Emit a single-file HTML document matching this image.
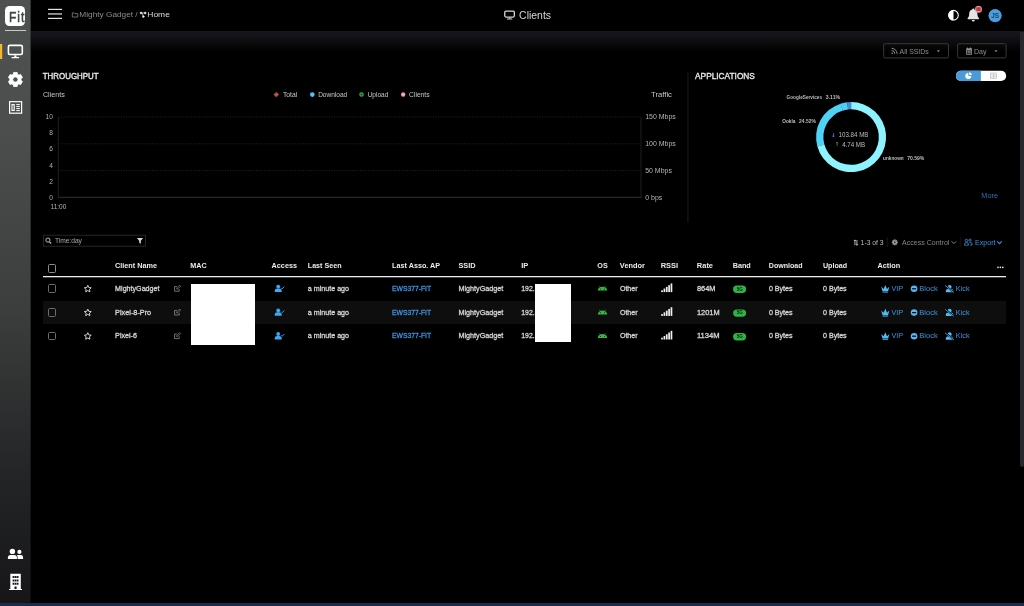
<!DOCTYPE html>
<html lang="en">
<head>
<meta charset="utf-8">
<title>Clients</title>
<style>
*{box-sizing:border-box;margin:0;padding:0}
html,body{width:1024px;height:606px;overflow:hidden;background:#000}
body{position:relative;font-family:"Liberation Sans",sans-serif;color:#ccc}
.abs,.t,svg.i{position:absolute}
.t{white-space:nowrap;line-height:1;display:block}
#side{left:0;top:0;width:31px;height:606px;background:linear-gradient(180deg,#4d5150 0px,#4b4e4d 130px,#3d3f3f 300px,#232425 480px,#161618 606px);border-right:1px solid rgba(0,0,0,.35)}
#hdr{left:31px;top:0;width:993px;height:31px;background:#000}
#band{left:31px;top:31px;width:993px;height:20.6px;background:linear-gradient(180deg,#17161c 0,#131318 25%,#0b0b0e 58%,#040405 85%,#000 100%)}
#foot{left:0;top:603px;width:1024px;height:3px;background:#1a2c4e}
#scroll{left:1019.6px;top:31.5px;width:4.4px;height:435.5px;background:#29292d;border-radius:0 0 2px 2px}
.btn{border:1px solid #3a3a3d;border-radius:1.5px}
.row2{left:43px;top:301.3px;width:963px;height:22.7px;background:#0e0e0e}
.cb{width:8.6px;height:8.6px;border:1px solid #6c6c6c;border-radius:1.5px}
.wb{background:#fff}
.pill{background:#3dbb4c;border-radius:4px}
</style>
</head>
<body>
<div id="side" class="abs"></div>
<div id="hdr" class="abs"></div>
<div id="band" class="abs"></div>
<div id="scroll" class="abs"></div>
<div id="foot" class="abs"></div>
<div id="tx" class="abs" style="left:0;top:0;width:1024px;height:606px;will-change:transform">
<div class="abs row2"></div>
<div class="abs wb" style="left:191px;top:284.1px;width:63.8px;height:61.1px"></div>
<div class="abs wb" style="left:535.3px;top:284.1px;width:36.2px;height:57.8px"></div>
<div class="abs cb" style="left:47.5px;top:264.1px;border-color:#8c8c8c"></div>
<div class="abs cb" style="left:47.5px;top:284.3px"></div>
<div class="abs cb" style="left:47.5px;top:308.1px"></div>
<div class="abs cb" style="left:47.5px;top:331.7px"></div>
<div class="abs" style="left:5px;top:6.2px;width:20.2px;height:20px;background:#fff;border-radius:4.5px;overflow:hidden"><span class="t" style="left:4.2px;top:3.2px;font-size:15px;font-weight:400;color:#414443;transform:scaleX(.8);transform-origin:0 0;letter-spacing:1.2px;-webkit-text-stroke:.55px #414443">Fit</span></div>
<svg class="i" style="left:0;top:0" width="1024" height="606" viewBox="0 0 1024 606">
<rect x="5" y="30" width="21" height="1" fill="#c9c9c9"/>
<rect x="0" y="44" width="2.2" height="15" fill="#f3b731"/>
<rect x="8.40" y="45.40" width="13.90" height="9.14" rx="1.44" fill="none" stroke="#fff" stroke-width="1.6"/><rect x="14.27" y="55.34" width="2.17" height="1.74" fill="#fff"/><rect x="11.48" y="56.92" width="7.75" height="1.28" rx="0.48" fill="#fff"/>
<path d="M13.33,74.30 L13.58,72.43 L17.22,72.43 L17.47,74.30 L18.87,75.11 L20.61,74.39 L22.43,77.54 L20.94,78.69 L20.94,80.31 L22.43,81.46 L20.61,84.61 L18.87,83.89 L17.47,84.70 L17.22,86.57 L13.58,86.57 L13.33,84.70 L11.93,83.89 L10.19,84.61 L8.37,81.46 L9.86,80.31 L9.86,78.69 L8.37,77.54 L10.19,74.39 L11.93,75.11Z M18.00,79.50 A2.6,2.6 0 1,0 12.80,79.50 A2.6,2.6 0 1,0 18.00,79.50Z" fill="#fff" fill-rule="evenodd" stroke="#fff" stroke-width="0.8" stroke-linejoin="round"/>
<g fill="none" stroke="#fff" stroke-width="1.2"><rect x="9.6" y="101.7" width="12" height="11.5"/><rect x="12" y="104.6" width="2.2" height="5.8" stroke-width="1.1"/></g>
<g stroke="#fff" stroke-width="1"><line x1="16.3" y1="104.6" x2="19.8" y2="104.6"/><line x1="16.3" y1="106.6" x2="19.8" y2="106.6"/><line x1="16.3" y1="108.6" x2="19.8" y2="108.6"/><line x1="16.3" y1="110.6" x2="19.8" y2="110.6"/></g>
<g fill="#fff"><circle cx="12.4" cy="551.4" r="2.7"/><path d="M7.9,559.1 v-1.6 a2.6,2.6 0 0 1 2.6,-2.6 h3.8 a2.6,2.6 0 0 1 2.6,2.6 v1.6z"/><circle cx="19.4" cy="551.9" r="2.1"/><path d="M17.6,559.1 v-1.7 q0,-1.3 -0.7,-2.1 q0.6,-0.4 1.3,-0.4 h2.5 a2.4,2.4 0 0 1 2.4,2.4 v1.8z"/></g>
<path fill="#fff" fill-rule="evenodd" d="M10.3,573.8 h10.5 v15.2 h1.2 v1 h-12.9 v-1 h1.2z M12.6,576 h1.7 v2 h-1.7z M14.7,576 h1.7 v2 h-1.7z M16.8,576 h1.7 v2 h-1.7z M12.6,579.4 h1.7 v2 h-1.7z M14.7,579.4 h1.7 v2 h-1.7z M16.8,579.4 h1.7 v2 h-1.7z M12.6,582.8 h1.7 v2 h-1.7z M14.7,582.8 h1.7 v2 h-1.7z M16.8,582.8 h1.7 v2 h-1.7z M14.5,586.6 h2.1 v2.4 h-2.1z"/>
<rect x="48" y="8.80" width="14" height="1.2" fill="#e4e4e4"/>
<rect x="48" y="13.35" width="14" height="1.2" fill="#e4e4e4"/>
<rect x="48" y="17.80" width="14" height="1.2" fill="#e4e4e4"/>
<path d="M72.3,12.9 h2 l0.7,0.8 h2.8 v3.3 h-5.5z" fill="none" stroke="#8d8d8d" stroke-width="0.75" stroke-linejoin="round"/>
<g fill="#e6e6e6" stroke="#e6e6e6" stroke-width="0.7"><circle cx="141" cy="13" r="0.9"/><circle cx="145.2" cy="13" r="0.9"/><circle cx="143.4" cy="16.6" r="0.9"/><path d="M141,13 L145.2,13 M142,13 L143.4,16.6" fill="none"/></g>
<rect x="504.75" y="11.15" width="9.60" height="5.89" rx="1.17" fill="none" stroke="#d6d6d6" stroke-width="1.3"/><rect x="508.79" y="17.69" width="1.53" height="1.00" fill="#d6d6d6"/><rect x="506.83" y="18.56" width="5.45" height="1.04" rx="0.39" fill="#d6d6d6"/>
<circle cx="953.5" cy="15.2" r="4.8" fill="#000" stroke="#fff" stroke-width="1.1"/><path d="M953.5,10 a5.2,5.2 0 0 0 0,10.4z" fill="#fff"/>
<path fill="#e3e3e3" d="M973.3,8.4 c0.6,0 1,0.4 1,1 c2,0.5 3.1,2.1 3.1,4.3 c0,2.3 0.6,3.4 1.5,4.3 c0.4,0.5 0.1,1.2 -0.6,1.2 h-10 c-0.7,0 -1,-0.7 -0.6,-1.2 c0.9,-0.9 1.5,-2 1.5,-4.3 c0,-2.2 1.1,-3.8 3.1,-4.3 c0,-0.6 0.4,-1 1,-1z M971.8,20 h3 a1.5,1.5 0 0 1 -3,0z"/>
<circle cx="978.5" cy="9.2" r="3.5" fill="#f287a0"/><rect x="976.3" y="7.3" width="4.4" height="3.8" rx="0.6" fill="#ad423c"/>
<circle cx="995.1" cy="15.6" r="6.6" fill="#4aa0de"/>
<text x="995.1" y="18" font-size="6.4" font-weight="700" fill="#1f3d59" text-anchor="middle" font-family="Liberation Sans, sans-serif">JS</text>
<g stroke="#2f2f2f" stroke-width="0.8" stroke-dasharray="1 1.6"><line x1="58.5" y1="117.1" x2="641" y2="117.1"/><line x1="58.5" y1="143.8" x2="641" y2="143.8"/><line x1="58.5" y1="170.6" x2="641" y2="170.6"/></g>
<g stroke="#222226" stroke-width="0.9"><line x1="58.3" y1="117" x2="58.3" y2="197.6"/><line x1="641" y1="117" x2="641" y2="197.6"/></g><line x1="58" y1="197.3" x2="641.3" y2="197.3" stroke="#303036" stroke-width="1"/>
<path d="M273.8,94.6 l2.5,-2.4 l2.5,2.4 l-2.5,2.4z" fill="#b9554c" stroke="#b9554c" stroke-width="0.5" stroke-linejoin="round"/>
<circle cx="312.3" cy="94.6" r="2.3" fill="#4fc3f7"/>
<circle cx="361.5" cy="94.6" r="1.7" fill="#14501c" stroke="#3cb24a" stroke-width="1.1"/>
<circle cx="403.2" cy="94.6" r="1.6" fill="#f7c3d9" stroke="#f48fb1" stroke-width="1.3"/>
<rect x="687.5" y="71.5" width="0.9" height="151" fill="#202025"/>
<path d="M851.07,102.10 A35,35 0 1,1 817.36,146.50 L824.34,144.55 A27.75,27.75 0 1,0 851.07,109.35Z" fill="#8ef3ff"/>
<path d="M817.41,146.67 A35,35 0 0,1 840.66,103.68 L842.82,110.61 A27.75,27.75 0 0,0 824.38,144.69Z" fill="#4fd2f4"/>
<path d="M840.48,103.74 A35,35 0 0,1 847.35,102.30 L848.12,109.51 A27.75,27.75 0 0,0 842.68,110.65Z" fill="#52ccf3"/>
<path d="M847.16,102.32 A35,35 0 0,1 851.25,102.10 L851.22,109.35 A27.75,27.75 0 0,0 847.97,109.52Z" fill="#3f8fd2"/>
<g fill="none" stroke="#38383b" stroke-width="1"><rect x="883.7" y="43.7" width="64.8" height="14.2" rx="1.2"/><rect x="957.7" y="43.7" width="48.4" height="14.2" rx="1.2"/></g>
<g fill="none" stroke="#8f8f8f" stroke-width="1"><path d="M891.6,50.6 a3.2,3.2 0 0 1 3.2,3.2"/><path d="M891.6,48.3 a5.5,5.5 0 0 1 5.5,5.5"/></g><circle cx="892.2" cy="53.2" r="0.8" fill="#8f8f8f"/>
<path d="M936.8,50.3 h3.2 l-1.6,1.9z" fill="#858585"/>
<path d="M994.4,50.3 h3.2 l-1.6,1.9z" fill="#858585"/>
<path fill="#8f8f8f" fill-rule="evenodd" d="M966.2,48.3 h1 v-0.9 h0.9 v0.9 h2 v-0.9 h0.9 v0.9 h1 v6.4 h-5.8z M967,50.4 v3.5 h4.2 v-3.5z"/><rect x="967.4" y="50.8" width="3.4" height="2.7" fill="#6a6a6a"/>
<rect x="955.9" y="70.8" width="50.3" height="10.2" rx="5.1" fill="#fdfdfd"/>
<path d="M961,70.8 h19.9 v10.2 h-19.9 a5.1,5.1 0 0 1 0,-10.2z" fill="#4a9bda"/>
<path d="M968.3,72.9 a3,3 0 1 0 3,3 h-3z" fill="#fff"/><path d="M969.2,72.3 a2.9,2.9 0 0 1 2.7,2.7 h-2.7z" fill="#fff"/>
<g fill="none" stroke="#b5b5b5" stroke-width="0.6"><rect x="990.6" y="73" width="6" height="5.6"/><line x1="990.6" y1="74.9" x2="996.6" y2="74.9"/><line x1="990.6" y1="76.8" x2="996.6" y2="76.8"/><line x1="993.6" y1="73" x2="993.6" y2="78.6"/></g>
<rect x="43.3" y="235.2" width="102.2" height="11" fill="none" stroke="#2b2b31" stroke-width="0.9"/>
<circle cx="47.9" cy="240.1" r="2.1" fill="none" stroke="#c4c4c4" stroke-width="0.95"/><line x1="49.5" y1="241.8" x2="51.2" y2="243.5" stroke="#c4c4c4" stroke-width="1.1"/>
<path d="M136.9,238 h6.2 l-2.3,2.8 v2.9 l-1.6,-0.9 v-2z" fill="#d8d8d8"/>
<g stroke="#cfcfcf" stroke-width="0.85" fill="none"><path d="M854.9,240 v5.2 M856.9,240 v5.2"/><path d="M853.9,241 l1,-1.1 l1,1.1 M855.9,244.2 l1,1.1 l1,-1.1"/></g>
<g stroke="#3a3a3a" stroke-width="0.7" stroke-dasharray="0.9 0.9"><line x1="887.3" y1="237.5" x2="887.3" y2="247"/><line x1="960.3" y1="237.5" x2="960.3" y2="247"/></g>
<path d="M894.21,240.18 L894.28,239.45 L895.32,239.45 L895.39,240.18 L895.88,240.39 L896.45,239.92 L897.18,240.65 L896.71,241.22 L896.92,241.71 L897.65,241.78 L897.65,242.82 L896.92,242.89 L896.71,243.38 L897.18,243.95 L896.45,244.68 L895.88,244.21 L895.39,244.42 L895.32,245.15 L894.28,245.15 L894.21,244.42 L893.72,244.21 L893.15,244.68 L892.42,243.95 L892.89,243.38 L892.68,242.89 L891.95,242.82 L891.95,241.78 L892.68,241.71 L892.89,241.22 L892.42,240.65 L893.15,239.92 L893.72,240.39Z M895.70,242.30 A0.9,0.9 0 1,0 893.90,242.30 A0.9,0.9 0 1,0 895.70,242.30Z" fill="#a0a0a0" fill-rule="evenodd" stroke="#a0a0a0" stroke-width="0.3" stroke-linejoin="round"/>
<path d="M951.6,241.3 l2.3,2.3 l2.3,-2.3" fill="none" stroke="#858585" stroke-width="1"/>
<path d="M997.2,241.3 l2.3,2.3 l2.3,-2.3" fill="none" stroke="#3b93e0" stroke-width="1.1"/>
<g fill="none" stroke="#3b93e0" stroke-width="0.8"><circle cx="966.4" cy="240.6" r="1.3"/><circle cx="970" cy="240.2" r="1.1"/><path d="M964.6,245.2 v-1 a1.6,1.6 0 0 1 1.6,-1.6 h0.6 a1.6,1.6 0 0 1 1.6,1.6 v1z"/><path d="M969.4,242.4 h1.2 a1.4,1.4 0 0 1 1.4,1.4 v1.2 h-2"/></g>
<rect x="43" y="276" width="963" height="1" fill="#ededed"/><rect x="43" y="277" width="963" height="1" fill="#ededed" opacity=".28"/>
<g fill="#e6e6e6"><circle cx="998" cy="267.3" r="0.85"/><circle cx="1000.4" cy="267.3" r="0.85"/><circle cx="1002.8" cy="267.3" r="0.85"/></g>
<path d="M87.80,285.30 L88.80,287.52 L91.22,287.79 L89.42,289.43 L89.92,291.81 L87.80,290.60 L85.68,291.81 L86.18,289.43 L84.38,287.79 L86.80,287.52Z" fill="none" stroke="#e8e8e8" stroke-width="0.9" stroke-linejoin="round"/>
<g fill="none" stroke="#969696" stroke-width="0.75"><path d="M179.2,289.00 v2.2 h-4.6 v-4.6 h2.3"/><path d="M176.7,289.10 l0.3,-1.3 l2.6,-2.6 l1,1 l-2.6,2.6z" stroke-width="0.65"/></g>
<g fill="#3fa9f5"><circle cx="278.2" cy="286.60" r="1.9"/><path d="M274.7,292.00 v-1 a2.5,2.5 0 0 1 2.5,-2.5 h2 a2.5,2.5 0 0 1 2.5,2.5 v1z"/></g><path d="M281.2,287.90 l1,1 l2.1,-2.3" fill="none" stroke="#3fa9f5" stroke-width="0.9"/>
<path d="M597.8,290.60 a4.7,3.9 0 0 1 9.4,0z" fill="#35b548"/><g stroke="#35b548" stroke-width="0.6"><line x1="599.3" y1="285.90" x2="600.3" y2="287.40"/><line x1="605.7" y1="285.90" x2="604.7" y2="287.40"/></g><circle cx="600.5" cy="289.00" r="0.5" fill="#06210a"/><circle cx="604.5" cy="289.00" r="0.5" fill="#06210a"/>
<rect x="661.20" y="290.30" width="1.7" height="1.80" fill="#f0f0f0"/>
<rect x="663.55" y="288.58" width="1.7" height="3.52" fill="#f0f0f0"/>
<rect x="665.90" y="286.86" width="1.7" height="5.24" fill="#f0f0f0"/>
<rect x="668.25" y="285.14" width="1.7" height="6.96" fill="#f0f0f0"/>
<rect x="670.60" y="283.42" width="1.7" height="8.68" fill="#f0f0f0"/>
<rect x="733.1" y="285.60" width="13" height="7.4" rx="3.7" fill="#2fb344"/>
<path d="M881.2,286.60 l2.4,2.3 l1.7,-4 l1.7,4 l2.4,-2.3 l-1.3,4.6 h-5.6z M882.5,291.80 h5.6 v0.8 h-5.6z" fill="#52b9f7"/>
<circle cx="914.1" cy="288.80" r="3.3" fill="#52b9f7"/><rect x="912.1" y="288.20" width="4" height="1.2" fill="#000"/>
<g fill="#52b9f7"><circle cx="949.6" cy="286.90" r="2"/><path d="M945.8,292.30 v-0.9 a2.6,2.6 0 0 1 2.6,-2.6 h2.4 a2.6,2.6 0 0 1 2.6,2.6 v0.9z"/></g><line x1="945.3" y1="285.30" x2="953.8" y2="292.30" stroke="#000" stroke-width="1.6"/><line x1="945.1" y1="285.50" x2="953.8" y2="292.50" stroke="#52b9f7" stroke-width="0.8"/>
<path d="M87.80,309.10 L88.80,311.32 L91.22,311.59 L89.42,313.23 L89.92,315.61 L87.80,314.40 L85.68,315.61 L86.18,313.23 L84.38,311.59 L86.80,311.32Z" fill="none" stroke="#e8e8e8" stroke-width="0.9" stroke-linejoin="round"/>
<g fill="none" stroke="#969696" stroke-width="0.75"><path d="M179.2,312.80 v2.2 h-4.6 v-4.6 h2.3"/><path d="M176.7,312.90 l0.3,-1.3 l2.6,-2.6 l1,1 l-2.6,2.6z" stroke-width="0.65"/></g>
<g fill="#3fa9f5"><circle cx="278.2" cy="310.40" r="1.9"/><path d="M274.7,315.80 v-1 a2.5,2.5 0 0 1 2.5,-2.5 h2 a2.5,2.5 0 0 1 2.5,2.5 v1z"/></g><path d="M281.2,311.70 l1,1 l2.1,-2.3" fill="none" stroke="#3fa9f5" stroke-width="0.9"/>
<path d="M597.8,314.40 a4.7,3.9 0 0 1 9.4,0z" fill="#35b548"/><g stroke="#35b548" stroke-width="0.6"><line x1="599.3" y1="309.70" x2="600.3" y2="311.20"/><line x1="605.7" y1="309.70" x2="604.7" y2="311.20"/></g><circle cx="600.5" cy="312.80" r="0.5" fill="#06210a"/><circle cx="604.5" cy="312.80" r="0.5" fill="#06210a"/>
<rect x="661.20" y="314.10" width="1.7" height="1.80" fill="#f0f0f0"/>
<rect x="663.55" y="312.38" width="1.7" height="3.52" fill="#f0f0f0"/>
<rect x="665.90" y="310.66" width="1.7" height="5.24" fill="#f0f0f0"/>
<rect x="668.25" y="308.94" width="1.7" height="6.96" fill="#f0f0f0"/>
<rect x="670.60" y="307.22" width="1.7" height="8.68" fill="#f0f0f0"/>
<rect x="733.1" y="309.40" width="13" height="7.4" rx="3.7" fill="#2fb344"/>
<path d="M881.2,310.40 l2.4,2.3 l1.7,-4 l1.7,4 l2.4,-2.3 l-1.3,4.6 h-5.6z M882.5,315.60 h5.6 v0.8 h-5.6z" fill="#52b9f7"/>
<circle cx="914.1" cy="312.60" r="3.3" fill="#52b9f7"/><rect x="912.1" y="312.00" width="4" height="1.2" fill="#000"/>
<g fill="#52b9f7"><circle cx="949.6" cy="310.70" r="2"/><path d="M945.8,316.10 v-0.9 a2.6,2.6 0 0 1 2.6,-2.6 h2.4 a2.6,2.6 0 0 1 2.6,2.6 v0.9z"/></g><line x1="945.3" y1="309.10" x2="953.8" y2="316.10" stroke="#000" stroke-width="1.6"/><line x1="945.1" y1="309.30" x2="953.8" y2="316.30" stroke="#52b9f7" stroke-width="0.8"/>
<path d="M87.80,332.70 L88.80,334.92 L91.22,335.19 L89.42,336.83 L89.92,339.21 L87.80,338.00 L85.68,339.21 L86.18,336.83 L84.38,335.19 L86.80,334.92Z" fill="none" stroke="#e8e8e8" stroke-width="0.9" stroke-linejoin="round"/>
<g fill="none" stroke="#969696" stroke-width="0.75"><path d="M179.2,336.40 v2.2 h-4.6 v-4.6 h2.3"/><path d="M176.7,336.50 l0.3,-1.3 l2.6,-2.6 l1,1 l-2.6,2.6z" stroke-width="0.65"/></g>
<g fill="#3fa9f5"><circle cx="278.2" cy="334.00" r="1.9"/><path d="M274.7,339.40 v-1 a2.5,2.5 0 0 1 2.5,-2.5 h2 a2.5,2.5 0 0 1 2.5,2.5 v1z"/></g><path d="M281.2,335.30 l1,1 l2.1,-2.3" fill="none" stroke="#3fa9f5" stroke-width="0.9"/>
<path d="M597.8,338.00 a4.7,3.9 0 0 1 9.4,0z" fill="#35b548"/><g stroke="#35b548" stroke-width="0.6"><line x1="599.3" y1="333.30" x2="600.3" y2="334.80"/><line x1="605.7" y1="333.30" x2="604.7" y2="334.80"/></g><circle cx="600.5" cy="336.40" r="0.5" fill="#06210a"/><circle cx="604.5" cy="336.40" r="0.5" fill="#06210a"/>
<rect x="661.20" y="337.70" width="1.7" height="1.80" fill="#f0f0f0"/>
<rect x="663.55" y="335.98" width="1.7" height="3.52" fill="#f0f0f0"/>
<rect x="665.90" y="334.26" width="1.7" height="5.24" fill="#f0f0f0"/>
<rect x="668.25" y="332.54" width="1.7" height="6.96" fill="#f0f0f0"/>
<rect x="670.60" y="330.82" width="1.7" height="8.68" fill="#f0f0f0"/>
<rect x="733.1" y="333.00" width="13" height="7.4" rx="3.7" fill="#2fb344"/>
<path d="M881.2,334.00 l2.4,2.3 l1.7,-4 l1.7,4 l2.4,-2.3 l-1.3,4.6 h-5.6z M882.5,339.20 h5.6 v0.8 h-5.6z" fill="#52b9f7"/>
<circle cx="914.1" cy="336.20" r="3.3" fill="#52b9f7"/><rect x="912.1" y="335.60" width="4" height="1.2" fill="#000"/>
<g fill="#52b9f7"><circle cx="949.6" cy="334.30" r="2"/><path d="M945.8,339.70 v-0.9 a2.6,2.6 0 0 1 2.6,-2.6 h2.4 a2.6,2.6 0 0 1 2.6,2.6 v0.9z"/></g><line x1="945.3" y1="332.70" x2="953.8" y2="339.70" stroke="#000" stroke-width="1.6"/><line x1="945.1" y1="332.90" x2="953.8" y2="339.90" stroke="#52b9f7" stroke-width="0.8"/>
</svg>
<svg class="i" style="left:0;top:0" width="1024" height="606" viewBox="0 0 1024 606" font-family="Liberation Sans, sans-serif">
<text x="79.35" y="17" font-size="8" fill="#8d8d8d" textLength="58.30" lengthAdjust="spacingAndGlyphs">Mighty Gadget /</text>
<text x="147.35" y="17" font-size="8" fill="#dcdcdc" textLength="22.50" lengthAdjust="spacingAndGlyphs">Home</text>
<text x="519.14" y="19" font-size="10" fill="#d6d6d6" textLength="31.92" lengthAdjust="spacingAndGlyphs">Clients</text>
<text x="42.78" y="79" font-size="9.2" fill="#e6e6e6" stroke="#e6e6e6" stroke-width="0.39" textLength="55.83" lengthAdjust="spacingAndGlyphs">THROUGHPUT</text>
<text x="42.89" y="97" font-size="7.4" fill="#c8c8c8" textLength="21.93" lengthAdjust="spacingAndGlyphs">Clients</text>
<text x="651.09" y="97" font-size="7.4" fill="#c8c8c8" textLength="20.83" lengthAdjust="spacingAndGlyphs">Traffic</text>
<text x="282.93" y="97" font-size="6.6" fill="#c8c8c8" textLength="14.34" lengthAdjust="spacingAndGlyphs">Total</text>
<text x="318.13" y="97" font-size="6.6" fill="#c8c8c8" textLength="29.14" lengthAdjust="spacingAndGlyphs">Download</text>
<text x="367.63" y="97" font-size="6.6" fill="#c8c8c8" textLength="20.64" lengthAdjust="spacingAndGlyphs">Upload</text>
<text x="409.13" y="97" font-size="6.6" fill="#c8c8c8" textLength="20.34" lengthAdjust="spacingAndGlyphs">Clients</text>
<text x="45.49" y="119" font-size="6.6" fill="#b4b4b4">10</text>
<text x="49.16" y="135" font-size="6.6" fill="#b4b4b4">8</text>
<text x="49.16" y="151" font-size="6.6" fill="#b4b4b4">6</text>
<text x="49.16" y="168" font-size="6.6" fill="#b4b4b4">4</text>
<text x="49.16" y="184" font-size="6.6" fill="#b4b4b4">2</text>
<text x="49.16" y="200" font-size="6.6" fill="#b4b4b4">0</text>
<text x="50.53" y="209" font-size="6.6" fill="#b4b4b4" textLength="15.74" lengthAdjust="spacingAndGlyphs">11:00</text>
<text x="645.23" y="119" font-size="6.6" fill="#b4b4b4" textLength="30.54" lengthAdjust="spacingAndGlyphs">150 Mbps</text>
<text x="645.23" y="146" font-size="6.6" fill="#b4b4b4" textLength="30.54" lengthAdjust="spacingAndGlyphs">100 Mbps</text>
<text x="645.23" y="173" font-size="6.6" fill="#b4b4b4" textLength="26.64" lengthAdjust="spacingAndGlyphs">50 Mbps</text>
<text x="645.23" y="200" font-size="6.6" fill="#b4b4b4" textLength="17.14" lengthAdjust="spacingAndGlyphs">0 bps</text>
<text x="695.08" y="79" font-size="9.2" fill="#e6e6e6" stroke="#e6e6e6" stroke-width="0.39" textLength="59.83" lengthAdjust="spacingAndGlyphs">APPLICATIONS</text>
<text x="786.60" y="99" font-size="5.4" fill="#bdbdbd" font-weight="700" textLength="35.50" lengthAdjust="spacingAndGlyphs">GoogleServices</text>
<text x="825.80" y="99" font-size="5.4" fill="#bdbdbd" font-weight="700" textLength="14.30" lengthAdjust="spacingAndGlyphs">3.11%</text>
<text x="782.20" y="123" font-size="5.4" fill="#bdbdbd" font-weight="700" textLength="13.30" lengthAdjust="spacingAndGlyphs">Ookla</text>
<text x="799.10" y="123" font-size="5.4" fill="#bdbdbd" font-weight="700" textLength="16.90" lengthAdjust="spacingAndGlyphs">24.52%</text>
<text x="883.00" y="160" font-size="5.4" fill="#bdbdbd" font-weight="700" textLength="20.70" lengthAdjust="spacingAndGlyphs">unknown</text>
<text x="907.20" y="160" font-size="5.4" fill="#bdbdbd" font-weight="700" textLength="17.10" lengthAdjust="spacingAndGlyphs">70.59%</text>
<text x="838.50" y="137" font-size="7.2" fill="#bdbdbd" textLength="29.91" lengthAdjust="spacingAndGlyphs">103.84 MB</text>
<text x="842.20" y="147" font-size="7.2" fill="#bdbdbd" textLength="22.91" lengthAdjust="spacingAndGlyphs">4.74 MB</text>
<text x="830.99" y="137" font-size="5.6" fill="#4a8fd6" font-weight="700" font-family="DejaVu Sans, sans-serif">↓</text>
<text x="834.79" y="146" font-size="5.6" fill="#7c7c7c" font-weight="700" font-family="DejaVu Sans, sans-serif">↑</text>
<text x="981.37" y="198" font-size="7.6" fill="#2f6fb5" textLength="16.75" lengthAdjust="spacingAndGlyphs">More</text>
<text x="899.55" y="54" font-size="8" fill="#8f8f8f" textLength="29.20" lengthAdjust="spacingAndGlyphs">All SSIDs</text>
<text x="974.05" y="54" font-size="8" fill="#8f8f8f" textLength="12.50" lengthAdjust="spacingAndGlyphs">Day</text>
<text x="54.91" y="243" font-size="7" fill="#a8a8a8" textLength="26.98" lengthAdjust="spacingAndGlyphs">Time:day</text>
<text x="860.61" y="245" font-size="7" fill="#bdbdbd" textLength="22.98" lengthAdjust="spacingAndGlyphs">1-3 of 3</text>
<text x="902.11" y="245" font-size="7" fill="#858585" textLength="47.28" lengthAdjust="spacingAndGlyphs">Access Control</text>
<text x="975.11" y="245" font-size="7" fill="#3b93e0" textLength="20.38" lengthAdjust="spacingAndGlyphs">Export</text>
<text x="115.07" y="268" font-size="7.6" fill="#ececec" font-weight="700" textLength="41.95" lengthAdjust="spacingAndGlyphs">Client Name</text>
<text x="190.27" y="268" font-size="7.6" fill="#ececec" font-weight="700" textLength="16.45" lengthAdjust="spacingAndGlyphs">MAC</text>
<text x="271.57" y="268" font-size="7.6" fill="#ececec" font-weight="700" textLength="25.45" lengthAdjust="spacingAndGlyphs">Access</text>
<text x="307.77" y="268" font-size="7.6" fill="#ececec" font-weight="700" textLength="33.75" lengthAdjust="spacingAndGlyphs">Last Seen</text>
<text x="392.07" y="268" font-size="7.6" fill="#ececec" font-weight="700" textLength="48.05" lengthAdjust="spacingAndGlyphs">Last Asso. AP</text>
<text x="458.47" y="268" font-size="7.6" fill="#ececec" font-weight="700" textLength="17.15" lengthAdjust="spacingAndGlyphs">SSID</text>
<text x="521.27" y="268" font-size="7.6" fill="#ececec" font-weight="700" textLength="7.15" lengthAdjust="spacingAndGlyphs">IP</text>
<text x="597.27" y="268" font-size="7.6" fill="#ececec" font-weight="700" textLength="10.45" lengthAdjust="spacingAndGlyphs">OS</text>
<text x="619.87" y="268" font-size="7.6" fill="#ececec" font-weight="700" textLength="25.05" lengthAdjust="spacingAndGlyphs">Vendor</text>
<text x="660.67" y="268" font-size="7.6" fill="#ececec" font-weight="700" textLength="17.45" lengthAdjust="spacingAndGlyphs">RSSI</text>
<text x="696.87" y="268" font-size="7.6" fill="#ececec" font-weight="700" textLength="16.15" lengthAdjust="spacingAndGlyphs">Rate</text>
<text x="732.67" y="268" font-size="7.6" fill="#ececec" font-weight="700" textLength="18.15" lengthAdjust="spacingAndGlyphs">Band</text>
<text x="768.87" y="268" font-size="7.6" fill="#ececec" font-weight="700" textLength="33.75" lengthAdjust="spacingAndGlyphs">Download</text>
<text x="822.97" y="268" font-size="7.6" fill="#ececec" font-weight="700" textLength="24.15" lengthAdjust="spacingAndGlyphs">Upload</text>
<text x="877.47" y="268" font-size="7.6" fill="#ececec" font-weight="700" textLength="22.75" lengthAdjust="spacingAndGlyphs">Action</text>
<text x="115.11" y="291" font-size="6.9" fill="#d4d4d4" stroke="#d4d4d4" stroke-width="0.29" textLength="44.37" lengthAdjust="spacingAndGlyphs">MightyGadget</text>
<text x="307.81" y="291" font-size="6.9" fill="#d4d4d4" stroke="#d4d4d4" stroke-width="0.29" textLength="41.27" lengthAdjust="spacingAndGlyphs">a minute ago</text>
<text x="392.11" y="291" font-size="6.9" fill="#3b93e0" stroke="#3b93e0" stroke-width="0.29" textLength="38.97" lengthAdjust="spacingAndGlyphs">EWS377-FIT</text>
<text x="458.51" y="291" font-size="6.9" fill="#d4d4d4" stroke="#d4d4d4" stroke-width="0.29" textLength="44.67" lengthAdjust="spacingAndGlyphs">MightyGadget</text>
<text x="521.31" y="291" font-size="6.9" fill="#d4d4d4" stroke="#d4d4d4" stroke-width="0.29" textLength="13.37" lengthAdjust="spacingAndGlyphs">192.</text>
<text x="619.91" y="291" font-size="6.9" fill="#d4d4d4" stroke="#d4d4d4" stroke-width="0.29" textLength="17.67" lengthAdjust="spacingAndGlyphs">Other</text>
<text x="696.91" y="291" font-size="6.9" fill="#d4d4d4" stroke="#d4d4d4" stroke-width="0.29" textLength="18.67" lengthAdjust="spacingAndGlyphs">864M</text>
<text x="768.91" y="291" font-size="6.9" fill="#d4d4d4" stroke="#d4d4d4" stroke-width="0.29" textLength="23.67" lengthAdjust="spacingAndGlyphs">0 Bytes</text>
<text x="823.01" y="291" font-size="6.9" fill="#d4d4d4" stroke="#d4d4d4" stroke-width="0.29" textLength="23.67" lengthAdjust="spacingAndGlyphs">0 Bytes</text>
<text x="891.40" y="291" font-size="7.2" fill="#4293dc" textLength="11.81" lengthAdjust="spacingAndGlyphs">VIP</text>
<text x="919.30" y="291" font-size="7.2" fill="#4293dc" textLength="18.41" lengthAdjust="spacingAndGlyphs">Block</text>
<text x="955.80" y="291" font-size="7.2" fill="#4293dc" textLength="13.81" lengthAdjust="spacingAndGlyphs">Kick</text>
<text x="736.63" y="291" font-size="4.8" fill="#08230d" font-weight="700" textLength="6.04" lengthAdjust="spacingAndGlyphs">5G</text>
<text x="115.11" y="315" font-size="6.9" fill="#d4d4d4" stroke="#d4d4d4" stroke-width="0.29" textLength="36.07" lengthAdjust="spacingAndGlyphs">Pixel-8-Pro</text>
<text x="307.81" y="315" font-size="6.9" fill="#d4d4d4" stroke="#d4d4d4" stroke-width="0.29" textLength="41.27" lengthAdjust="spacingAndGlyphs">a minute ago</text>
<text x="392.11" y="315" font-size="6.9" fill="#3b93e0" stroke="#3b93e0" stroke-width="0.29" textLength="38.97" lengthAdjust="spacingAndGlyphs">EWS377-FIT</text>
<text x="458.51" y="315" font-size="6.9" fill="#d4d4d4" stroke="#d4d4d4" stroke-width="0.29" textLength="44.67" lengthAdjust="spacingAndGlyphs">MightyGadget</text>
<text x="521.31" y="315" font-size="6.9" fill="#d4d4d4" stroke="#d4d4d4" stroke-width="0.29" textLength="13.37" lengthAdjust="spacingAndGlyphs">192.</text>
<text x="619.91" y="315" font-size="6.9" fill="#d4d4d4" stroke="#d4d4d4" stroke-width="0.29" textLength="17.67" lengthAdjust="spacingAndGlyphs">Other</text>
<text x="696.91" y="315" font-size="6.9" fill="#d4d4d4" stroke="#d4d4d4" stroke-width="0.29" textLength="22.67" lengthAdjust="spacingAndGlyphs">1201M</text>
<text x="768.91" y="315" font-size="6.9" fill="#d4d4d4" stroke="#d4d4d4" stroke-width="0.29" textLength="23.67" lengthAdjust="spacingAndGlyphs">0 Bytes</text>
<text x="823.01" y="315" font-size="6.9" fill="#d4d4d4" stroke="#d4d4d4" stroke-width="0.29" textLength="23.67" lengthAdjust="spacingAndGlyphs">0 Bytes</text>
<text x="891.40" y="315" font-size="7.2" fill="#4293dc" textLength="11.81" lengthAdjust="spacingAndGlyphs">VIP</text>
<text x="919.30" y="315" font-size="7.2" fill="#4293dc" textLength="18.41" lengthAdjust="spacingAndGlyphs">Block</text>
<text x="955.80" y="315" font-size="7.2" fill="#4293dc" textLength="13.81" lengthAdjust="spacingAndGlyphs">Kick</text>
<text x="736.63" y="314" font-size="4.8" fill="#08230d" font-weight="700" textLength="6.04" lengthAdjust="spacingAndGlyphs">5G</text>
<text x="115.11" y="338" font-size="6.9" fill="#d4d4d4" stroke="#d4d4d4" stroke-width="0.29" textLength="21.87" lengthAdjust="spacingAndGlyphs">Pixel-6</text>
<text x="307.81" y="338" font-size="6.9" fill="#d4d4d4" stroke="#d4d4d4" stroke-width="0.29" textLength="41.27" lengthAdjust="spacingAndGlyphs">a minute ago</text>
<text x="392.11" y="338" font-size="6.9" fill="#3b93e0" stroke="#3b93e0" stroke-width="0.29" textLength="38.97" lengthAdjust="spacingAndGlyphs">EWS377-FIT</text>
<text x="458.51" y="338" font-size="6.9" fill="#d4d4d4" stroke="#d4d4d4" stroke-width="0.29" textLength="44.67" lengthAdjust="spacingAndGlyphs">MightyGadget</text>
<text x="521.31" y="338" font-size="6.9" fill="#d4d4d4" stroke="#d4d4d4" stroke-width="0.29" textLength="13.37" lengthAdjust="spacingAndGlyphs">192.</text>
<text x="619.91" y="338" font-size="6.9" fill="#d4d4d4" stroke="#d4d4d4" stroke-width="0.29" textLength="17.67" lengthAdjust="spacingAndGlyphs">Other</text>
<text x="696.91" y="338" font-size="6.9" fill="#d4d4d4" stroke="#d4d4d4" stroke-width="0.29" textLength="22.67" lengthAdjust="spacingAndGlyphs">1134M</text>
<text x="768.91" y="338" font-size="6.9" fill="#d4d4d4" stroke="#d4d4d4" stroke-width="0.29" textLength="23.67" lengthAdjust="spacingAndGlyphs">0 Bytes</text>
<text x="823.01" y="338" font-size="6.9" fill="#d4d4d4" stroke="#d4d4d4" stroke-width="0.29" textLength="23.67" lengthAdjust="spacingAndGlyphs">0 Bytes</text>
<text x="891.40" y="338" font-size="7.2" fill="#4293dc" textLength="11.81" lengthAdjust="spacingAndGlyphs">VIP</text>
<text x="919.30" y="338" font-size="7.2" fill="#4293dc" textLength="18.41" lengthAdjust="spacingAndGlyphs">Block</text>
<text x="955.80" y="338" font-size="7.2" fill="#4293dc" textLength="13.81" lengthAdjust="spacingAndGlyphs">Kick</text>
<text x="736.63" y="338" font-size="4.8" fill="#08230d" font-weight="700" textLength="6.04" lengthAdjust="spacingAndGlyphs">5G</text>
</svg>
</div>
</body>
</html>
